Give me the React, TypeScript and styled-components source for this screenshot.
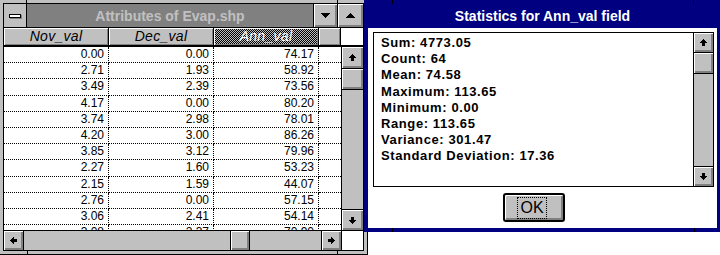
import React from "react";
import styled, { createGlobalStyle } from "styled-components";

const GlobalStyle = createGlobalStyle`
  html, body {
    margin: 0;
    padding: 0;
    background: #fff;
    overflow: hidden;
  }
  body {
    font-family: "Liberation Sans", Arial, sans-serif;
  }
`;

const rows = [
  ["0.00", "0.00", "74.17"],
  ["2.71", "1.93", "58.92"],
  ["3.49", "2.39", "73.56"],
  ["4.17", "0.00", "80.20"],
  ["3.74", "2.98", "78.01"],
  ["4.20", "3.00", "86.26"],
  ["3.85", "3.12", "79.96"],
  ["2.27", "1.60", "53.23"],
  ["2.15", "1.59", "44.07"],
  ["2.76", "0.00", "57.15"],
  ["3.06", "2.41", "54.14"],
  ["3.08", "2.37", "70.90"],
];

const stats = [
  "Sum: 4773.05",
  "Count: 64",
  "Mean: 74.58",
  "Maximum: 113.65",
  "Minimum: 0.00",
  "Range: 113.65",
  "Variance: 301.47",
  "Standard Deviation: 17.36",
];

// win 3.1 scroll arrow: triangle rows then a 3px stem
const arrowRows = [
  [3, 1],
  [2, 3],
  [1, 5],
  [0, 7],
  [2, 3],
  [2, 3],
  [2, 3],
];

type Dir = "up" | "down" | "left" | "right";

const ArrowIcon = ({ dir }: { dir: Dir }) => (
  <svg width="7" height="7" viewBox="0 0 7 7" fill="#000" shapeRendering="crispEdges">
    {arrowRows.map(([s, l], i) => {
      let x = s, y = i, w = l, h = 1;
      if (dir === "down") y = 6 - i;
      if (dir === "left") { x = i; y = s; w = 1; h = l; }
      if (dir === "right") { x = 6 - i; y = s; w = 1; h = l; }
      return <rect key={i} x={x} y={y} width={w} height={h} />;
    })}
  </svg>
);

const Triangle = ({ down }: { down?: boolean }) => (
  <svg width="9" height="5" viewBox="0 0 9 5" fill="#000" shapeRendering="crispEdges">
    {[0, 1, 2, 3, 4].map((i) => (
      <rect key={i} x={i} y={down ? i : 4 - i} width={9 - i * 2} height={1} />
    ))}
  </svg>
);

const Screen = styled.div`
  display: flex;
  align-items: flex-start;
  width: 720px;
  height: 255px;
  overflow: hidden;
`;

/* ---------- table window ---------- */

const Win = styled.div`
  flex: none;
  margin: -1px 0 0 -1px;
  width: 369px;
  height: 256px;
  box-sizing: border-box;
  border: 1px solid #000;
  padding: 3px;
  background:
    linear-gradient(#000, #000) 26px 0 / 1px 3px no-repeat,
    linear-gradient(#000, #000) 337px 0 / 1px 3px no-repeat,
    linear-gradient(#000, #000) 27px 100% / 1px 3px no-repeat,
    linear-gradient(#000, #000) 337px 100% / 1px 3px no-repeat,
    #c0c0c0;
`;

const WinInner = styled.div`
  height: 100%;
  box-sizing: border-box;
  border: 1px solid #000;
  display: flex;
  flex-direction: column;
  background: #fff;
`;

const TitleBar = styled.div`
  display: flex;
  height: 23px;
  border-bottom: 1px solid #000;
`;

const ControlBox = styled.div`
  width: 22px;
  border-right: 1px solid #000;
  background: #c0c0c0;
  display: flex;
  align-items: center;
  justify-content: center;
`;

const Dash = styled.div`
  width: 10px;
  height: 2px;
  margin: 1px 0 0 -1px;
  background: #fff;
  border: 1px solid #000;
  box-shadow: 1px 1px 0 #808080;
`;

const Caption = styled.div<{ $active?: boolean }>`
  flex: 1;
  display: flex;
  align-items: center;
  justify-content: center;
  background: ${(p) => (p.$active ? "#000080" : "#808080")};
  color: ${(p) => (p.$active ? "#fff" : "#c0c0c0")};
  font: bold 14px "Liberation Sans", Arial, sans-serif;
  white-space: nowrap;
`;

const CapButton = styled.div<{ $w: number }>`
  width: ${(p) => p.$w}px;
  border-left: 1px solid #000;
  background: #c0c0c0;
  box-shadow: inset 1px 1px 0 #fff, inset -2px -2px 0 #808080;
  display: flex;
  align-items: center;
  justify-content: center;
`;

const Header = styled.div`
  display: grid;
  grid-template-columns: 105px 105px 105px 22px 22px;
  height: 17px;
  border-bottom: 2px solid #000;
`;

const HeadCell = styled.div<{ $selected?: boolean }>`
  box-sizing: border-box;
  border-right: 1px solid #000;
  background: ${(p) =>
    p.$selected
      ? "repeating-conic-gradient(#000 0 25%, #c0c0c0 0 50%) 0 0 / 2px 2px"
      : "#c0c0c0"};
  box-shadow: inset 1px 1px 0 #fff, inset -1px -1px 0 #808080;
  color: ${(p) => (p.$selected ? "#fff" : "#000")};
  font: italic 14px "Liberation Sans", Arial, sans-serif;
  letter-spacing: 0.3px;
  line-height: 17px;
  text-align: center;
`;

const BlankHead = styled.div`
  background: #fff;
`;

const TableBody = styled.div`
  flex: 1;
  display: flex;
  min-height: 0;
`;

const DataGrid = styled.div`
  width: 337px;
  overflow: hidden;
`;

const Row = styled.div`
  display: grid;
  grid-template-columns: 105px 105px 105px 22px;
  height: 16.2px;
`;

const Cell = styled.div<{ $last?: boolean }>`
  box-sizing: border-box;
  border-bottom: 1px dotted #000;
  border-right: ${(p) => (p.$last ? "none" : "1px dotted #000")};
  padding-right: 4px;
  text-align: right;
  font: 12px "Liberation Sans", Arial, sans-serif;
  line-height: 15.2px;
  color: #000;
`;

const VScroll = styled.div<{ $w: number }>`
  width: ${(p) => p.$w}px;
  box-sizing: border-box;
  border-left: 1px solid #000;
  background: #c0c0c0;
  display: flex;
  flex-direction: column;
`;

const ScrollBtn = styled.div<{ $h: number; $edge: "top" | "bottom" | "left" | "right" }>`
  flex: none;
  height: ${(p) => p.$h}px;
  ${(p) => `border-${p.$edge}: 1px solid #000;`}
  background: #c0c0c0;
  box-shadow: inset 1px 1px 0 #fff, inset -2px -2px 0 #808080;
  display: flex;
  align-items: center;
  justify-content: center;
`;

const Track = styled.div`
  flex: 1;
  background: #c0c0c0;
`;

const HScroll = styled.div`
  display: flex;
  height: 20px;
  box-sizing: border-box;
  border-top: 1px solid #000;
  background: #c0c0c0;
`;

const HBtn = styled(ScrollBtn)`
  width: 19px;
  height: auto;
`;

const HThumb = styled.div`
  flex: none;
  width: 18px;
  margin-left: 206px;
  border-left: 1px solid #000;
  border-right: 1px solid #000;
  box-shadow: inset 1px 1px 0 #fff, inset -2px -2px 0 #808080;
`;

const Corner = styled.div`
  width: 21px;
  border-left: 1px solid #000;
  background: #fff;
`;

/* ---------- statistics dialog ---------- */

const Dialog = styled.div`
  flex: none;
  position: relative;
  z-index: 1;
  margin-left: -4px;
  width: 356px;
  height: 232px;
  box-sizing: border-box;
  padding: 4px 3px 4px 4px;
  background:
    linear-gradient(#000, #000) 28px 0 / 1px 4px no-repeat,
    linear-gradient(#000, #000) 329px 0 / 1px 4px no-repeat,
    linear-gradient(#000, #000) 28px 100% / 1px 4px no-repeat,
    linear-gradient(#000, #000) 330px 100% / 1px 4px no-repeat,
    #000080;
  display: flex;
  flex-direction: column;
`;

const DialogTitle = styled(Caption)`
  flex: none;
  height: 24px;
`;

const DialogBody = styled.div`
  flex: 1;
  background: #fff;
  padding: 4px 3px 0 5px;
  display: flex;
  flex-direction: column;
`;

const ListBox = styled.div`
  height: 155px;
  box-sizing: border-box;
  border: 1px solid #000;
  display: flex;
`;

const StatsText = styled.div`
  flex: 1;
  padding: 2px 0 0 7px;
  font: bold 13px "Liberation Sans", Arial, sans-serif;
  letter-spacing: 0.6px;
  line-height: 16.2px;
  color: #000;
`;

const ButtonRow = styled.div`
  display: flex;
  padding: 6px 0 0 130px;
`;

const PushButton = styled.div`
  width: 62px;
  height: 29px;
  box-sizing: border-box;
  border: 2px solid #000;
  border-radius: 3px;
  background: #c0c0c0;
  box-shadow: inset 1px 1px 0 #fff, inset -2px -2px 0 #808080;
  display: flex;
  align-items: center;
  justify-content: center;
  padding-right: 4px;
`;

const FocusLabel = styled.span`
  padding: 1px 2px;
  outline: 1px dotted #000;
  font: 16px "Liberation Sans", Arial, sans-serif;
  line-height: 18px;
  color: #000;
`;

export default function App() {
  return (
    <>
      <GlobalStyle />
      <Screen>
        <Win>
          <WinInner>
            <TitleBar>
              <ControlBox>
                <Dash />
              </ControlBox>
              <Caption>Attributes of Evap.shp</Caption>
              <CapButton $w={23}>
                <Triangle down />
              </CapButton>
              <CapButton $w={25}>
                <Triangle />
              </CapButton>
            </TitleBar>
            <Header>
              <HeadCell>Nov_val</HeadCell>
              <HeadCell>Dec_val</HeadCell>
              <HeadCell $selected>Ann_val</HeadCell>
              <HeadCell />
              <BlankHead />
            </Header>
            <TableBody>
              <DataGrid>
                {rows.map((r, i) => (
                  <Row key={i}>
                    {r.map((v, j) => (
                      <Cell key={j}>{v}</Cell>
                    ))}
                    <Cell $last />
                  </Row>
                ))}
              </DataGrid>
              <VScroll $w={22}>
                <ScrollBtn $h={21} $edge="bottom">
                  <ArrowIcon dir="up" />
                </ScrollBtn>
                <ScrollBtn $h={20} $edge="bottom" />
                <Track />
                <ScrollBtn $h={20} $edge="top">
                  <ArrowIcon dir="down" />
                </ScrollBtn>
              </VScroll>
            </TableBody>
            <HScroll>
              <HBtn $h={19} $edge="right">
                <ArrowIcon dir="left" />
              </HBtn>
              <HThumb />
              <Track />
              <HBtn $h={19} $edge="left">
                <ArrowIcon dir="right" />
              </HBtn>
              <Corner />
            </HScroll>
          </WinInner>
        </Win>

        <Dialog>
          <DialogTitle $active>Statistics for Ann_val field</DialogTitle>
          <DialogBody>
            <ListBox>
              <StatsText>
                {stats.map((s) => (
                  <div key={s}>{s}</div>
                ))}
              </StatsText>
              <VScroll $w={20}>
                <ScrollBtn $h={19} $edge="bottom">
                  <ArrowIcon dir="up" />
                </ScrollBtn>
                <ScrollBtn $h={20} $edge="bottom" />
                <Track />
                <ScrollBtn $h={19} $edge="top">
                  <ArrowIcon dir="down" />
                </ScrollBtn>
              </VScroll>
            </ListBox>
            <ButtonRow>
              <PushButton>
                <FocusLabel>OK</FocusLabel>
              </PushButton>
            </ButtonRow>
          </DialogBody>
        </Dialog>
      </Screen>
    </>
  );
}
